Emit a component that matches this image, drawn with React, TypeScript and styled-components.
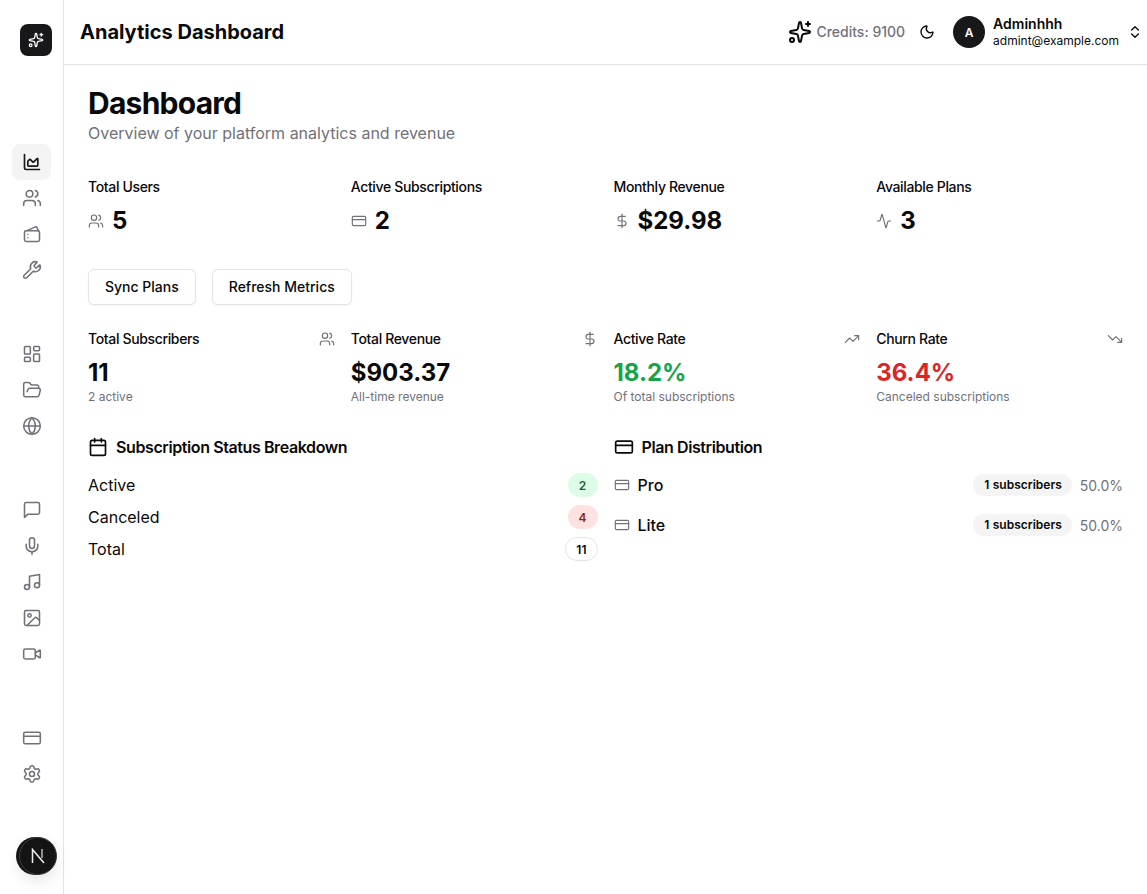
import { FC, SVGProps } from "react";
import styled, { createGlobalStyle } from "styled-components";
import {
  Activity,
  Calendar,
  ChartArea,
  ChevronsUpDown,
  CreditCard,
  DollarSign,
  FolderOpen,
  Globe,
  Image,
  LayoutDashboard,
  Mic,
  Moon,
  Music,
  Settings,
  Sparkles,
  TrendingDown,
  TrendingUp,
  Users,
  Video,
  Wrench,
} from "lucide-react";

type IconType = FC<{ size?: number; strokeWidth?: number }>;

const GlobalStyle = createGlobalStyle`
  * {
    box-sizing: border-box;
  }
  html, body {
    margin: 0;
    padding: 0;
    background: #ffffff;
    font-family: Inter, "Liberation Sans", sans-serif;
    color: #09090b;
  }
`;

const Shell = styled.div`
  display: flex;
  width: 1147px;
  height: 894px;
  overflow: hidden;
  position: relative;
`;

const Sidebar = styled.aside`
  width: 64px;
  flex-shrink: 0;
  border-right: 1px solid #e4e4e7;
  display: flex;
  flex-direction: column;
  align-items: flex-start;
  padding: 24px 0 0 12px;
`;

const Logo = styled.div`
  width: 32px;
  height: 32px;
  margin-left: 8px;
  border-radius: 8px;
  background: #18181b;
  color: #fafafa;
  display: flex;
  align-items: center;
  justify-content: center;
`;

const Nav = styled.nav`
  margin-top: 88px;
  display: flex;
  flex-direction: column;
  gap: 48px;
`;

const NavGroup = styled.div`
  display: flex;
  flex-direction: column;
`;

const NavItem = styled.div<{ $active?: boolean }>`
  width: 39px;
  height: 36px;
  padding-left: 1px;
  border-radius: 8px;
  display: flex;
  align-items: center;
  justify-content: center;
  color: ${(p) => (p.$active ? "#18181b" : "#71717a")};
  background: ${(p) => (p.$active ? "#f4f4f5" : "transparent")};
`;

const DevBadge = styled.div`
  position: absolute;
  left: 19px;
  top: 837px;
  width: 38px;
  height: 38px;
  border-radius: 50%;
  background: #141414;
  color: #f0f0f0;
  border: 1px solid #3a3a3a;
  box-shadow: -3px 0 0 #141414, 0 6px 16px rgba(0, 0, 0, 0.1);
  display: flex;
  align-items: center;
  justify-content: center;
`;

const Main = styled.div`
  flex: 1;
  min-width: 0;
  display: flex;
  flex-direction: column;
`;

const Header = styled.header`
  height: 65px;
  flex-shrink: 0;
  border-bottom: 1px solid #e4e4e7;
  display: flex;
  align-items: center;
  justify-content: space-between;
  padding: 0 4px 0 16px;
`;

const AppTitle = styled.h1`
  margin: 0;
  font-size: 20px;
  line-height: 28px;
  font-weight: 700;
`;

const HeaderRight = styled.div`
  display: flex;
  align-items: center;
`;

const Credits = styled.div`
  display: flex;
  align-items: center;
  gap: 4px;
  font-size: 14px;
  line-height: 20px;
  font-weight: 500;
  color: #71717a;
  svg {
    color: #09090b;
    margin-top: -1px;
  }
`;

const ThemeToggle = styled.div`
  width: 16px;
  display: flex;
  justify-content: center;
  margin-left: 14px;
  margin-right: 18px;
`;

const Avatar = styled.div`
  width: 32px;
  height: 32px;
  border-radius: 50%;
  background: #18181b;
  color: #fafafa;
  font-size: 12px;
  font-weight: 600;
  display: flex;
  align-items: center;
  justify-content: center;
`;

const UserInfo = styled.div`
  margin-left: 8px;
  margin-right: 8px;
  display: flex;
  flex-direction: column;
`;

const UserName = styled.span`
  font-size: 14px;
  line-height: 16px;
  font-weight: 600;
`;

const UserEmail = styled.span`
  font-size: 12px;
  line-height: 16px;
  margin-top: 1px;
`;

const Content = styled.main`
  padding: 23px 24px 0;
`;

const PageTitle = styled.h2`
  margin: 0;
  font-size: 30px;
  line-height: 30px;
  font-weight: 700;
  letter-spacing: -0.025em;
`;

const PageSubtitle = styled.p`
  margin: 3px 0 0;
  font-size: 16px;
  line-height: 24px;
  color: #71717a;
`;

const StatGrid = styled.div`
  margin-top: 32px;
  display: grid;
  grid-template-columns: repeat(4, 1fr);
  column-gap: 16px;
`;

const Label = styled.div`
  font-size: 14px;
  line-height: 20px;
  font-weight: 500;
  letter-spacing: -0.025em;
`;

const StatValueRow = styled.div`
  margin-top: 8px;
  display: flex;
  align-items: center;
  gap: 8px;
  color: #71717a;
`;

const Value = styled.div<{ $tone?: string }>`
  font-size: 24px;
  line-height: 32px;
  font-weight: 700;
  color: ${(p) => p.$tone ?? "#09090b"};
`;

const Actions = styled.div`
  margin-top: 32px;
  display: flex;
  gap: 16px;
`;

const Button = styled.button`
  height: 36px;
  padding: 0 16px 2px;
  border: 1px solid #e4e4e7;
  border-radius: 6px;
  background: #ffffff;
  box-shadow: 0 1px 2px rgba(0, 0, 0, 0.05);
  font-family: inherit;
  font-size: 14px;
  font-weight: 500;
  color: #09090b;
`;

const MetricGrid = styled(StatGrid)`
  margin-top: 24px;
`;

const MetricHead = styled.div`
  display: flex;
  align-items: center;
  justify-content: space-between;
  color: #71717a;
  ${Label} {
    color: #09090b;
  }
`;

const MetricValue = styled(Value)`
  margin-top: 8px;
`;

const MetricNote = styled.div`
  font-size: 12px;
  line-height: 16px;
  color: #71717a;
`;

const Columns = styled.div`
  margin-top: 30px;
  display: grid;
  grid-template-columns: 1fr 1fr;
  column-gap: 16px;
`;

const SectionTitle = styled.h3`
  margin: 0;
  display: flex;
  align-items: center;
  gap: 8px;
  font-size: 16px;
  line-height: 24px;
  font-weight: 600;
  letter-spacing: -0.025em;
`;

const StatusList = styled.div`
  margin-top: 14px;
  display: flex;
  flex-direction: column;
  gap: 8px;
`;

const Row = styled.div`
  display: flex;
  align-items: center;
  justify-content: space-between;
  height: 24px;
  font-size: 16px;
`;

const Badge = styled.span<{ $bg: string; $fg: string; $line?: boolean }>`
  height: 24px;
  min-width: 30px;
  padding: 0 10px;
  border-radius: 12px;
  display: inline-flex;
  align-items: center;
  justify-content: center;
  font-size: 12px;
  font-weight: 600;
  background: ${(p) => p.$bg};
  color: ${(p) => p.$fg};
  border: 1px solid ${(p) => (p.$line ? "#e4e4e7" : "transparent")};
`;

const PlanList = styled.div`
  margin-top: 14px;
  display: flex;
  flex-direction: column;
  gap: 16px;
`;

const PlanName = styled.div`
  display: flex;
  align-items: center;
  gap: 8px;
  font-weight: 500;
  svg {
    color: #71717a;
  }
`;

const PlanMeta = styled.div`
  display: flex;
  align-items: center;
  gap: 8px;
`;

const SubscriberPill = styled.span`
  height: 22px;
  padding: 0 10px 2px 11px;
  border-radius: 11px;
  background: #f4f4f5;
  display: inline-flex;
  align-items: center;
  font-size: 12px;
  font-weight: 600;
  word-spacing: 0.5px;
`;

const Percent = styled.span`
  font-size: 14px;
  color: #71717a;
`;

const Glyph: FC<SVGProps<SVGSVGElement> & { size?: number }> = ({ size = 20, children, ...rest }) => (
  <svg
    width={size}
    height={size}
    viewBox="0 0 24 24"
    fill="none"
    stroke="currentColor"
    strokeWidth={2}
    strokeLinecap="round"
    strokeLinejoin="round"
    {...rest}
  >
    {children}
  </svg>
);

// flap wallet, not in lucide
const WalletFlap: IconType = (props) => (
  <Glyph {...props}>
    <rect x="3" y="8" width="18" height="13" rx="2" />
    <path d="M6 8l10-4.6a1.5 1.5 0 0 1 2 .8L19.5 8" />
    <path d="M7 12.5h.01M7 16.5h.01" />
  </Glyph>
);

// older square-cornered chat bubble
const ChatBubble: IconType = (props) => (
  <Glyph {...props}>
    <path d="M21 15a2 2 0 0 1-2 2H7l-4 4V5a2 2 0 0 1 2-2h14a2 2 0 0 1 2 2z" />
  </Glyph>
);

const NextMark = () => (
  <svg width="14" height="16" viewBox="0 0 14 16" fill="none" stroke="currentColor" strokeWidth="1.5">
    <path d="M1.5 15V1.5L13 15" />
    <path d="M11 1v9" strokeOpacity="0.75" />
  </svg>
);

const navGroups: IconType[][] = [
  [ChartArea, Users, WalletFlap, Wrench],
  [LayoutDashboard, FolderOpen, Globe],
  [ChatBubble, Mic, Music, Image, Video],
  [CreditCard, Settings],
];

const stats: { label: string; value: string; icon: IconType }[] = [
  { label: "Total Users", value: "5", icon: Users },
  { label: "Active Subscriptions", value: "2", icon: CreditCard },
  { label: "Monthly Revenue", value: "$29.98", icon: DollarSign },
  { label: "Available Plans", value: "3", icon: Activity },
];

const metrics: { label: string; value: string; note: string; icon: IconType; tone?: string }[] = [
  { label: "Total Subscribers", value: "11", note: "2 active", icon: Users },
  { label: "Total Revenue", value: "$903.37", note: "All-time revenue", icon: DollarSign },
  { label: "Active Rate", value: "18.2%", note: "Of total subscriptions", icon: TrendingUp, tone: "#16a34a" },
  { label: "Churn Rate", value: "36.4%", note: "Canceled subscriptions", icon: TrendingDown, tone: "#dc2626" },
];

const PlanRow: FC<{ name: string }> = ({ name }) => (
  <Row>
    <PlanName>
      <CreditCard size={16} strokeWidth={1.75} />
      {name}
    </PlanName>
    <PlanMeta>
      <SubscriberPill>1 subscribers</SubscriberPill>
      <Percent>50.0%</Percent>
    </PlanMeta>
  </Row>
);

export default function App() {
  return (
    <Shell>
      <GlobalStyle />
      <Sidebar>
        <Logo>
          <Sparkles size={16} />
        </Logo>
        <Nav>
          {navGroups.map((group, i) => (
            <NavGroup key={i}>
              {group.map((Icon, j) => (
                <NavItem key={j} $active={i === 0 && j === 0}>
                  <Icon size={20} strokeWidth={i === 0 && j === 0 ? 2 : 1.85} />
                </NavItem>
              ))}
            </NavGroup>
          ))}
        </Nav>
      </Sidebar>
      <DevBadge>
        <NextMark />
      </DevBadge>

      <Main>
        <Header>
          <AppTitle>Analytics Dashboard</AppTitle>
          <HeaderRight>
            <Credits>
              <Sparkles size={24} />
              Credits: 9100
            </Credits>
            <ThemeToggle>
              <Moon size={16} />
            </ThemeToggle>
            <Avatar>A</Avatar>
            <UserInfo>
              <UserName>Adminhhh</UserName>
              <UserEmail>admint@example.com</UserEmail>
            </UserInfo>
            <ChevronsUpDown size={16} />
          </HeaderRight>
        </Header>

        <Content>
          <PageTitle>Dashboard</PageTitle>
          <PageSubtitle>Overview of your platform analytics and revenue</PageSubtitle>

          <StatGrid>
            {stats.map(({ label, value, icon: Icon }) => (
              <div key={label}>
                <Label>{label}</Label>
                <StatValueRow>
                  <Icon size={16} strokeWidth={1.75} />
                  <Value>{value}</Value>
                </StatValueRow>
              </div>
            ))}
          </StatGrid>

          <Actions>
            <Button>Sync Plans</Button>
            <Button>Refresh Metrics</Button>
          </Actions>

          <MetricGrid>
            {metrics.map(({ label, value, note, icon: Icon, tone }) => (
              <div key={label}>
                <MetricHead>
                  <Label>{label}</Label>
                  <Icon size={16} strokeWidth={1.75} />
                </MetricHead>
                <MetricValue $tone={tone}>{value}</MetricValue>
                <MetricNote>{note}</MetricNote>
              </div>
            ))}
          </MetricGrid>

          <Columns>
            <div>
              <SectionTitle>
                <Calendar size={20} />
                Subscription Status Breakdown
              </SectionTitle>
              <StatusList>
                <Row>
                  Active
                  <Badge $bg="#dcfce7" $fg="#166534">2</Badge>
                </Row>
                <Row>
                  Canceled
                  <Badge $bg="#fee2e2" $fg="#991b1b">4</Badge>
                </Row>
                <Row>
                  Total
                  <Badge $bg="#ffffff" $fg="#09090b" $line>11</Badge>
                </Row>
              </StatusList>
            </div>
            <div>
              <SectionTitle>
                <CreditCard size={20} />
                Plan Distribution
              </SectionTitle>
              <PlanList>
                <PlanRow name="Pro" />
                <PlanRow name="Lite" />
              </PlanList>
            </div>
          </Columns>
        </Content>
      </Main>
    </Shell>
  );
}
